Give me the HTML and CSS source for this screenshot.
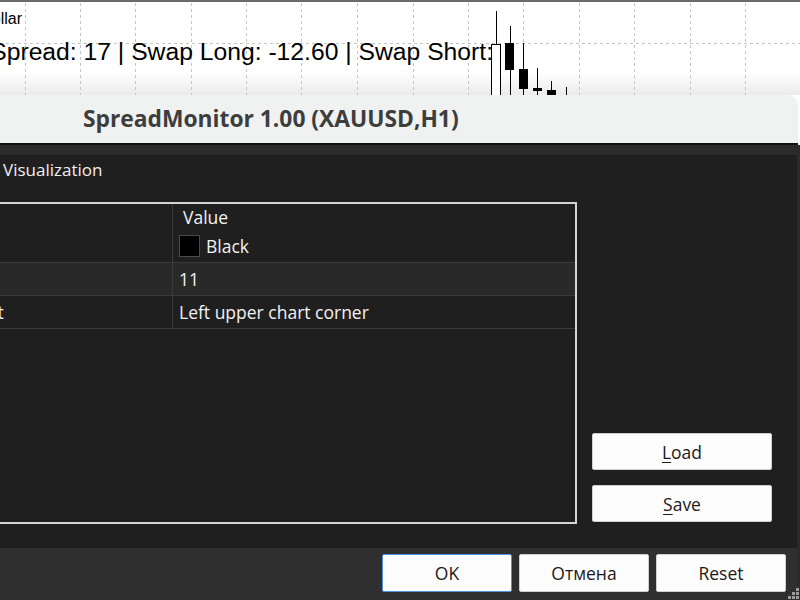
FILE: index.html
```html
<!DOCTYPE html>
<html>
<head>
<meta charset="utf-8">
<title>SpreadMonitor</title>
<link rel="stylesheet" href="styles.css">
</head>
<body>
<div class="chart">
  <svg class="chart-grid" width="800" height="95" viewBox="0 0 800 95">
    <line x1="0" y1="1" x2="800" y2="1" stroke="#3a3a3a" stroke-width="1.5"/>
    <g stroke="#c4c4c4" stroke-width="1" stroke-dasharray="3 3">
      <line x1="25.5" y1="3" x2="25.5" y2="95"/>
      <line x1="80.5" y1="3" x2="80.5" y2="95"/>
      <line x1="135.5" y1="3" x2="135.5" y2="95"/>
      <line x1="191.5" y1="3" x2="191.5" y2="95"/>
      <line x1="246.5" y1="3" x2="246.5" y2="95"/>
      <line x1="301.5" y1="3" x2="301.5" y2="95"/>
      <line x1="357.5" y1="3" x2="357.5" y2="95"/>
      <line x1="413.5" y1="3" x2="413.5" y2="95"/>
      <line x1="468.5" y1="3" x2="468.5" y2="95"/>
      <line x1="523.5" y1="3" x2="523.5" y2="95"/>
      <line x1="579.5" y1="3" x2="579.5" y2="95"/>
      <line x1="634.5" y1="3" x2="634.5" y2="95"/>
      <line x1="690.5" y1="3" x2="690.5" y2="95"/>
      <line x1="745.5" y1="3" x2="745.5" y2="95"/>
      <line x1="0" y1="43.5" x2="800" y2="43.5"/>
    </g>
    <g stroke="#000" stroke-width="1" fill="#000">
      <line x1="496.5" y1="11" x2="496.5" y2="44"/>
      <rect x="491.5" y="44.5" width="9" height="60" fill="#fff"/>
      <line x1="510.5" y1="26" x2="510.5" y2="95"/>
      <rect x="505.5" y="43.5" width="8" height="26"/>
      <line x1="523.5" y1="43" x2="523.5" y2="95"/>
      <rect x="519.5" y="69.5" width="8" height="19"/>
      <line x1="537.5" y1="68" x2="537.5" y2="95"/>
      <rect x="533.5" y="88.5" width="8" height="2"/>
      <line x1="551.5" y1="81" x2="551.5" y2="95"/>
      <rect x="547.5" y="90.5" width="8" height="8"/>
      <line x1="566.5" y1="87" x2="566.5" y2="95"/>
    </g>
  </svg>
  <div class="chart-label chart-name">Gold vs US Dollar</div>
  <div class="chart-label chart-info">Spread: 17 | Swap Long: -12.60 | Swap Short:</div>
</div>

<div class="dialog">
  <div class="titlebar">SpreadMonitor 1.00 (XAUUSD,H1)</div>
  <div class="body">
    <div class="tabstrip"></div>
    <div class="tab">Visualization</div>
    <div class="main">
      <div class="params">
        <div class="row head">
          <div class="c1">Variable</div>
          <div class="c2">Value</div>
        </div>
        <div class="row">
          <div class="c1">Text color</div>
          <div class="c2"><span class="swatch"></span>Black</div>
        </div>
        <div class="row alt">
          <div class="c1">Font size</div>
          <div class="c2">11</div>
        </div>
        <div class="row">
          <div class="c1">Text anchor point</div>
          <div class="c2">Left upper chart corner</div>
        </div>
      </div>
      <div class="side">
        <button class="btn side-btn"><u>L</u>oad</button>
        <button class="btn side-btn"><u>S</u>ave</button>
      </div>
    </div>
  </div>
  <div class="footer">
    <button class="btn foot-btn ok">OK</button>
    <button class="btn foot-btn">Отмена</button>
    <button class="btn foot-btn">Reset</button>
  </div>
  <svg class="grip" width="14" height="14" viewBox="0 0 14 14">
    <g fill="#9a9a9a">
      <rect x="10" y="2" width="3" height="3"/>
      <rect x="6" y="6" width="3" height="3"/>
      <rect x="10" y="6" width="3" height="3"/>
      <rect x="2" y="10" width="3" height="3"/>
      <rect x="6" y="10" width="3" height="3"/>
      <rect x="10" y="10" width="3" height="3"/>
    </g>
  </svg>
</div>
</body>
</html>
```

FILE: styles.css
```css
html, body {
  margin: 0;
  padding: 0;
}
body {
  width: 800px;
  height: 600px;
  overflow: hidden;
  background: #ffffff;
  font-family: "Open Sans", "Noto Sans", sans-serif;
}

/* chart */
.chart {
  position: relative;
  height: 95px;
  overflow: hidden;
  background: linear-gradient(to bottom, #ffffff 0, #ffffff 76%, #ebebeb 100%);
}
.chart-grid {
  position: absolute;
  left: 0;
  top: 0;
}
.chart-label {
  position: absolute;
  white-space: nowrap;
  color: #000;
  font-family: "Liberation Sans", Arial, sans-serif;
}
.chart-name {
  right: 778px;
  top: 10px;
  font-size: 16px;
  line-height: 18px;
}
.chart-info {
  right: 307px;
  top: 37px;
  font-size: 24.7px;
  line-height: 29px;
}

/* dialog */
.dialog {
  position: relative;
  width: 800px;
}
.titlebar {
  height: 50px;
  box-sizing: border-box;
  margin-right: 2px;
  padding-left: 83px;
  background: #f0f1f1;
  border-top-right-radius: 10px;
  border-bottom: 2px solid #121212;
  color: #3d3d3d;
  font-size: 22.8px;
  font-weight: 700;
  line-height: 47px;
  white-space: nowrap;
}
.body {
  background: #1f1f1f;
  border-right: 3px solid #2b2b2b;
}
.tabstrip {
  height: 10px;
  background: #2b2b2b;
}
.tab {
  height: 47px;
  box-sizing: border-box;
  padding: 4px 0 0 3px;
  color: #f0f0f0;
  font-size: 17px;
  line-height: 22px;
}
.main {
  display: flex;
  padding-bottom: 24px;
}
.params {
  flex: none;
  margin-left: -148px;
  width: 725px;
  height: 322px;
  box-sizing: border-box;
  border: 2px solid #d4d4d4;
  color: #f2f2f2;
  font-size: 17.5px;
}
.row {
  display: flex;
  height: 33px;
  box-sizing: border-box;
  border-bottom: 1px solid #3a3a3a;
}
.row.head {
  height: 26px;
  border-bottom: none;
}
.row.alt {
  background: #292929;
}
.c1 {
  flex: none;
  width: 319px;
  box-sizing: border-box;
  padding-left: 6px;
  border-right: 1px solid #3a3a3a;
  display: flex;
  align-items: center;
  white-space: nowrap;
}
.c2 {
  flex: 1;
  display: flex;
  align-items: center;
  padding-left: 6px;
  white-space: nowrap;
}
.head .c2 {
  padding-left: 10px;
}
.swatch {
  width: 19px;
  height: 20px;
  margin-right: 6px;
  background: #000;
  border: 1px solid #4a4a4a;
}
.side {
  display: flex;
  flex-direction: column;
  justify-content: flex-end;
  gap: 15px;
  margin-left: 15px;
  padding-bottom: 2px;
}
.btn {
  box-sizing: border-box;
  margin: 0;
  padding: 0;
  background: #fdfdfd;
  border: 1px solid #cfcfcf;
  border-radius: 2px;
  color: #1a1a1a;
  font-family: "Open Sans", "Noto Sans", sans-serif;
  font-size: 17.5px;
}
.btn u {
  text-underline-offset: 3px;
}
.side-btn {
  width: 180px;
  height: 37px;
}
.footer {
  display: flex;
  justify-content: flex-end;
  gap: 7px;
  height: 52px;
  box-sizing: border-box;
  padding: 6px 11px 0 0;
  background: #2f2f2f;
  border-right: 3px solid #2b2b2b;
}
.foot-btn {
  width: 130px;
  height: 38px;
}
.foot-btn.ok {
  border-color: #4a94e0;
}
.grip {
  position: absolute;
  right: 0;
  bottom: 0;
}
```
